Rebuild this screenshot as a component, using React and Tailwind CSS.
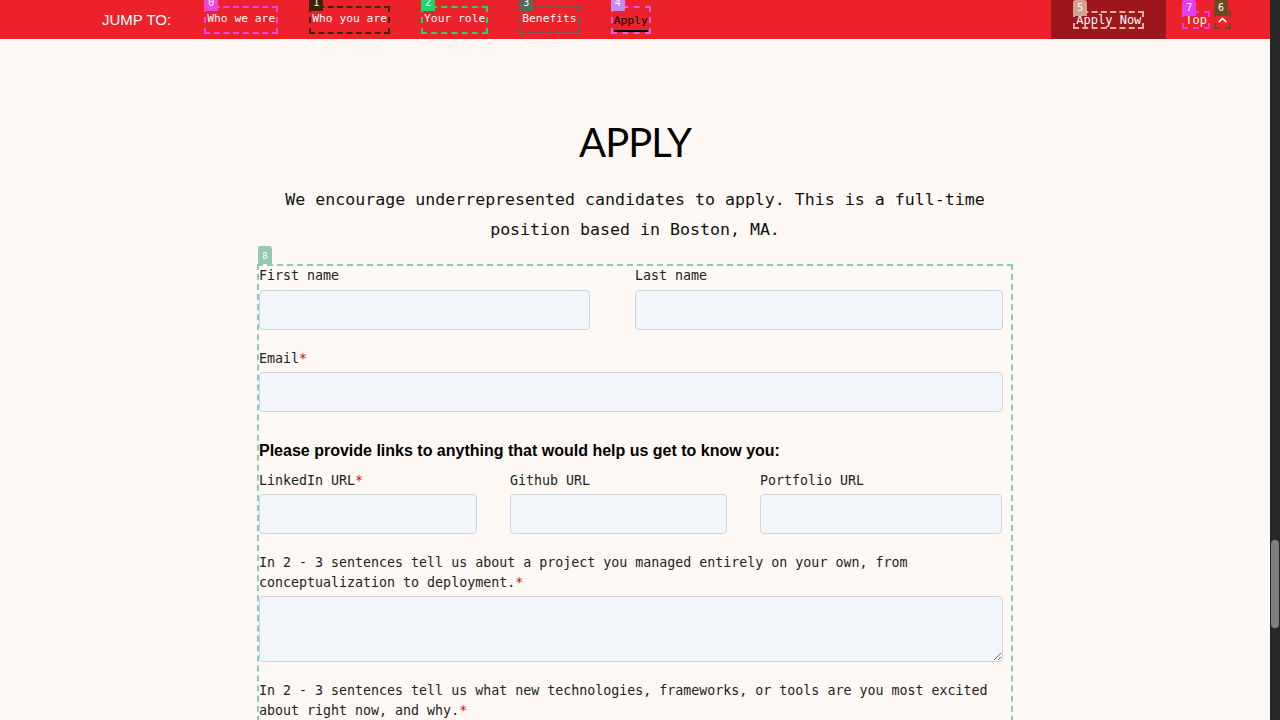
import { ChevronUp } from "lucide-react";

const mono = "font-['DejaVu_Sans_Mono',monospace]";

// little numbered tag that sits on top of a dashed outline
function Tag({ n, color }) {
  return (
    <span
      className={`absolute -left-[2px] bottom-full -mb-[3px] h-[16px] min-w-[14px] px-[3px] rounded-t-[3px] text-[10px] leading-[16px] text-center text-white font-['DejaVu_Sans_Mono',monospace] ${color}`}
    >
      {n}
    </span>
  );
}

function NavItem({ n, label, tag, border, active }) {
  return (
    <a className={`relative flex items-center h-[28px] border-2 border-dashed px-[1px] text-[11.3px] whitespace-nowrap ${mono} ${border} ${active ? "text-black" : "text-white"}`}>
      <Tag n={n} color={tag} />
      <span className={active ? "border-b-2 border-black leading-[18px] mt-[4px]" : ""}>{label}</span>
    </a>
  );
}

function Label({ children, req }) {
  return (
    <label className={`block text-[13.3px] leading-[20px] text-[#222] ${mono}`}>
      {children}
      {req && <span className="text-[#e60000]">*</span>}
    </label>
  );
}

const inputCls =
  "block h-[40px] bg-[#f3f6fa] border border-[#cbd5e1] rounded-[4px] outline-none";

export default function App() {
  return (
    <div className="flex h-[720px] w-[1280px] overflow-hidden bg-[#fff9f5]">
      <div className="flex-1 flex flex-col">
        {/* NAV */}
        <nav className="shrink-0 h-[39px] bg-[#ed2129] flex items-center pl-[102px] pr-[39px]">
          <span className="text-white text-[15px] font-['Liberation_Sans',sans-serif] mr-[33px] mt-[2px]">
            JUMP TO:
          </span>
          <div className="flex items-center gap-[31px]">
            <NavItem n="0" label="Who we are" tag="bg-[#e84ad8]" border="border-[#f04ae0]" />
            <NavItem n="1" label="Who you are" tag="bg-[#3d2608]" border="border-[#3d2608]" />
            <NavItem n="2" label="Your role" tag="bg-[#1ed66e]" border="border-[#1ed66e]" />
            <NavItem n="3" label="Benefits" tag="bg-[#58685a]" border="border-[#58685a]" />
            <NavItem n="4" label="Apply" tag="bg-[#c98af0]" border="border-[#e060f0]" active />
          </div>
          <div className="ml-auto flex items-center h-full">
            <div className="h-full w-[115px] bg-[#9c161b] flex items-center pl-[22px]">
              <a className={`relative h-[18px] flex items-center border-2 border-dashed border-[#e0b0a0] px-[1px] text-white text-[12px] whitespace-nowrap ${mono}`}>
                <Tag n="5" color="bg-[#d4a090]" />
                Apply Now
              </a>
            </div>
            <a className={`relative ml-[16px] h-[18px] flex items-center border-2 border-dashed border-[#e040f0] px-[1px] text-white text-[12px] ${mono}`}>
              <Tag n="7" color="bg-[#e040f0]" />
              Top
            </a>
            <a className="relative ml-[4px] h-[18px] w-[17px] flex items-center justify-center border-2 border-dashed border-[#6a4a20] text-white">
              <Tag n="6" color="bg-[#6a4a20]" />
              <ChevronUp size={14} strokeWidth={3} />
            </a>
          </div>
        </nav>

        {/* CONTENT */}
        <main className="flex flex-col items-center">
          <h1 className="mt-[79px] text-[40px] leading-[48px] text-black font-['Lato',sans-serif] tracking-[-1px]">
            APPLY
          </h1>
          <p className={`mt-[19px] w-[754px] text-center text-[16.6px] leading-[30px] text-[#111] ${mono}`}>
            We encourage underrepresented candidates to apply. This is a full-time position based in Boston, MA.
          </p>

          <form className="relative mt-[19px] w-[756px] border-2 border-dashed border-[#8fcbb0]">
            <span className={`absolute -left-[1px] -top-[20px] h-[18px] w-[14px] rounded-t-[3px] bg-[#93c9b2] text-white text-[9px] leading-[20px] text-center ${mono}`}>
              8
            </span>

            <div className="flex">
              <div className="w-[376px]">
                <Label>First name</Label>
                <input className={`${inputCls} mt-[4px] w-[331px]`} />
              </div>
              <div>
                <Label>Last name</Label>
                <input className={`${inputCls} mt-[4px] w-[368px]`} />
              </div>
            </div>

            <div className="mt-[19px]">
              <Label req>Email</Label>
              <input className={`${inputCls} mt-[3px] w-[744px]`} />
            </div>

            <h3 className="mt-[28px] text-[16px] leading-[22px] font-bold text-black font-['Liberation_Sans',sans-serif]">
              Please provide links to anything that would help us get to know you:
            </h3>

            <div className="flex mt-[9px]">
              <div className="w-[251px]">
                <Label req>LinkedIn URL</Label>
                <input className={`${inputCls} mt-[3px] w-[218px]`} />
              </div>
              <div className="w-[250px]">
                <Label>Github URL</Label>
                <input className={`${inputCls} mt-[3px] w-[217px]`} />
              </div>
              <div>
                <Label>Portfolio URL</Label>
                <input className={`${inputCls} mt-[3px] w-[242px]`} />
              </div>
            </div>

            <div className="mt-[19px]">
              <Label req>
                In 2 - 3 sentences tell us about a project you managed entirely on your own, from conceptualization to deployment.
              </Label>
              <textarea className="block mt-[3px] w-[744px] h-[66px] bg-[#f3f6fa] border border-[#cbd5e1] rounded-[4px] outline-none" />
            </div>

            <div className="mt-[19px]">
              <Label req>
                In 2 - 3 sentences tell us what new technologies, frameworks, or tools are you most excited about right now, and why.
              </Label>
              <textarea className="block mt-[3px] w-[744px] h-[66px] bg-[#f3f6fa] border border-[#cbd5e1] rounded-[4px] outline-none" />
            </div>
          </form>
        </main>
      </div>

      {/* scrollbar */}
      <div className="w-[10px] bg-[#272727] flex flex-col items-center pt-[540px]">
        <div className="w-[8px] h-[88px] rounded-full bg-[#7f7f7f]" />
      </div>
    </div>
  );
}
